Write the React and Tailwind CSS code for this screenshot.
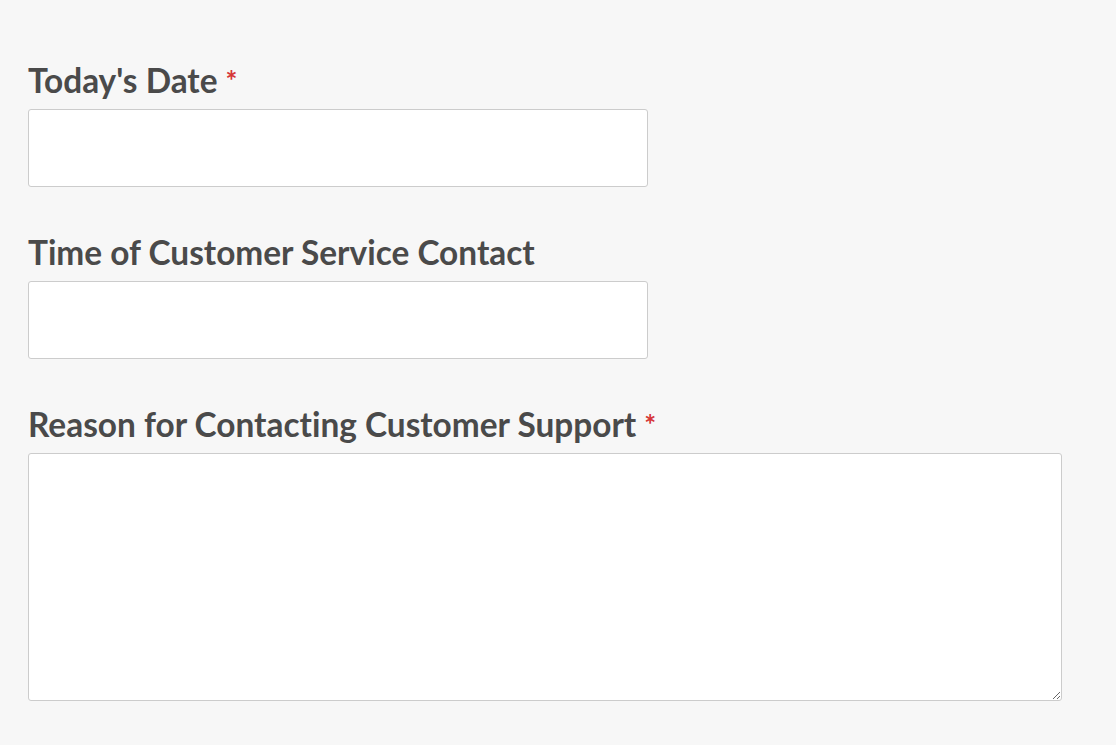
export default function App() {
  const fields = [
    { label: "Today's Date", required: true, kind: "input" },
    { label: "Time of Customer Service Contact", required: false, kind: "input" },
    { label: "Reason for Contacting Customer Support", required: true, kind: "textarea" },
  ];

  return (
    <div className="min-h-[745px] w-full bg-[#f7f7f7] px-[28px] pt-[61px]" style={{ fontFamily: "Lato, 'Open Sans', sans-serif" }}>
      {fields.map((f, i) => (
        <div key={i} className="mb-[46px]">
          <label className="block text-[33.4px] leading-[39px] font-bold text-[#4a4a4a] mb-[9px] [font-variant-ligatures:none]">
            {f.label}
            {f.required && <span className="ml-[8px] text-[28px] align-top text-[#d63637]">*</span>}
          </label>
          {f.kind === "input" ? (
            <input
              type="text"
              className="block h-[78px] w-[620px] rounded-[3px] border border-[#cccccc] bg-white outline-none"
            />
          ) : (
            <textarea className="block h-[248px] w-[1034px] rounded-[3px] border border-[#cccccc] bg-white outline-none" />
          )}
        </div>
      ))}
    </div>
  );
}
